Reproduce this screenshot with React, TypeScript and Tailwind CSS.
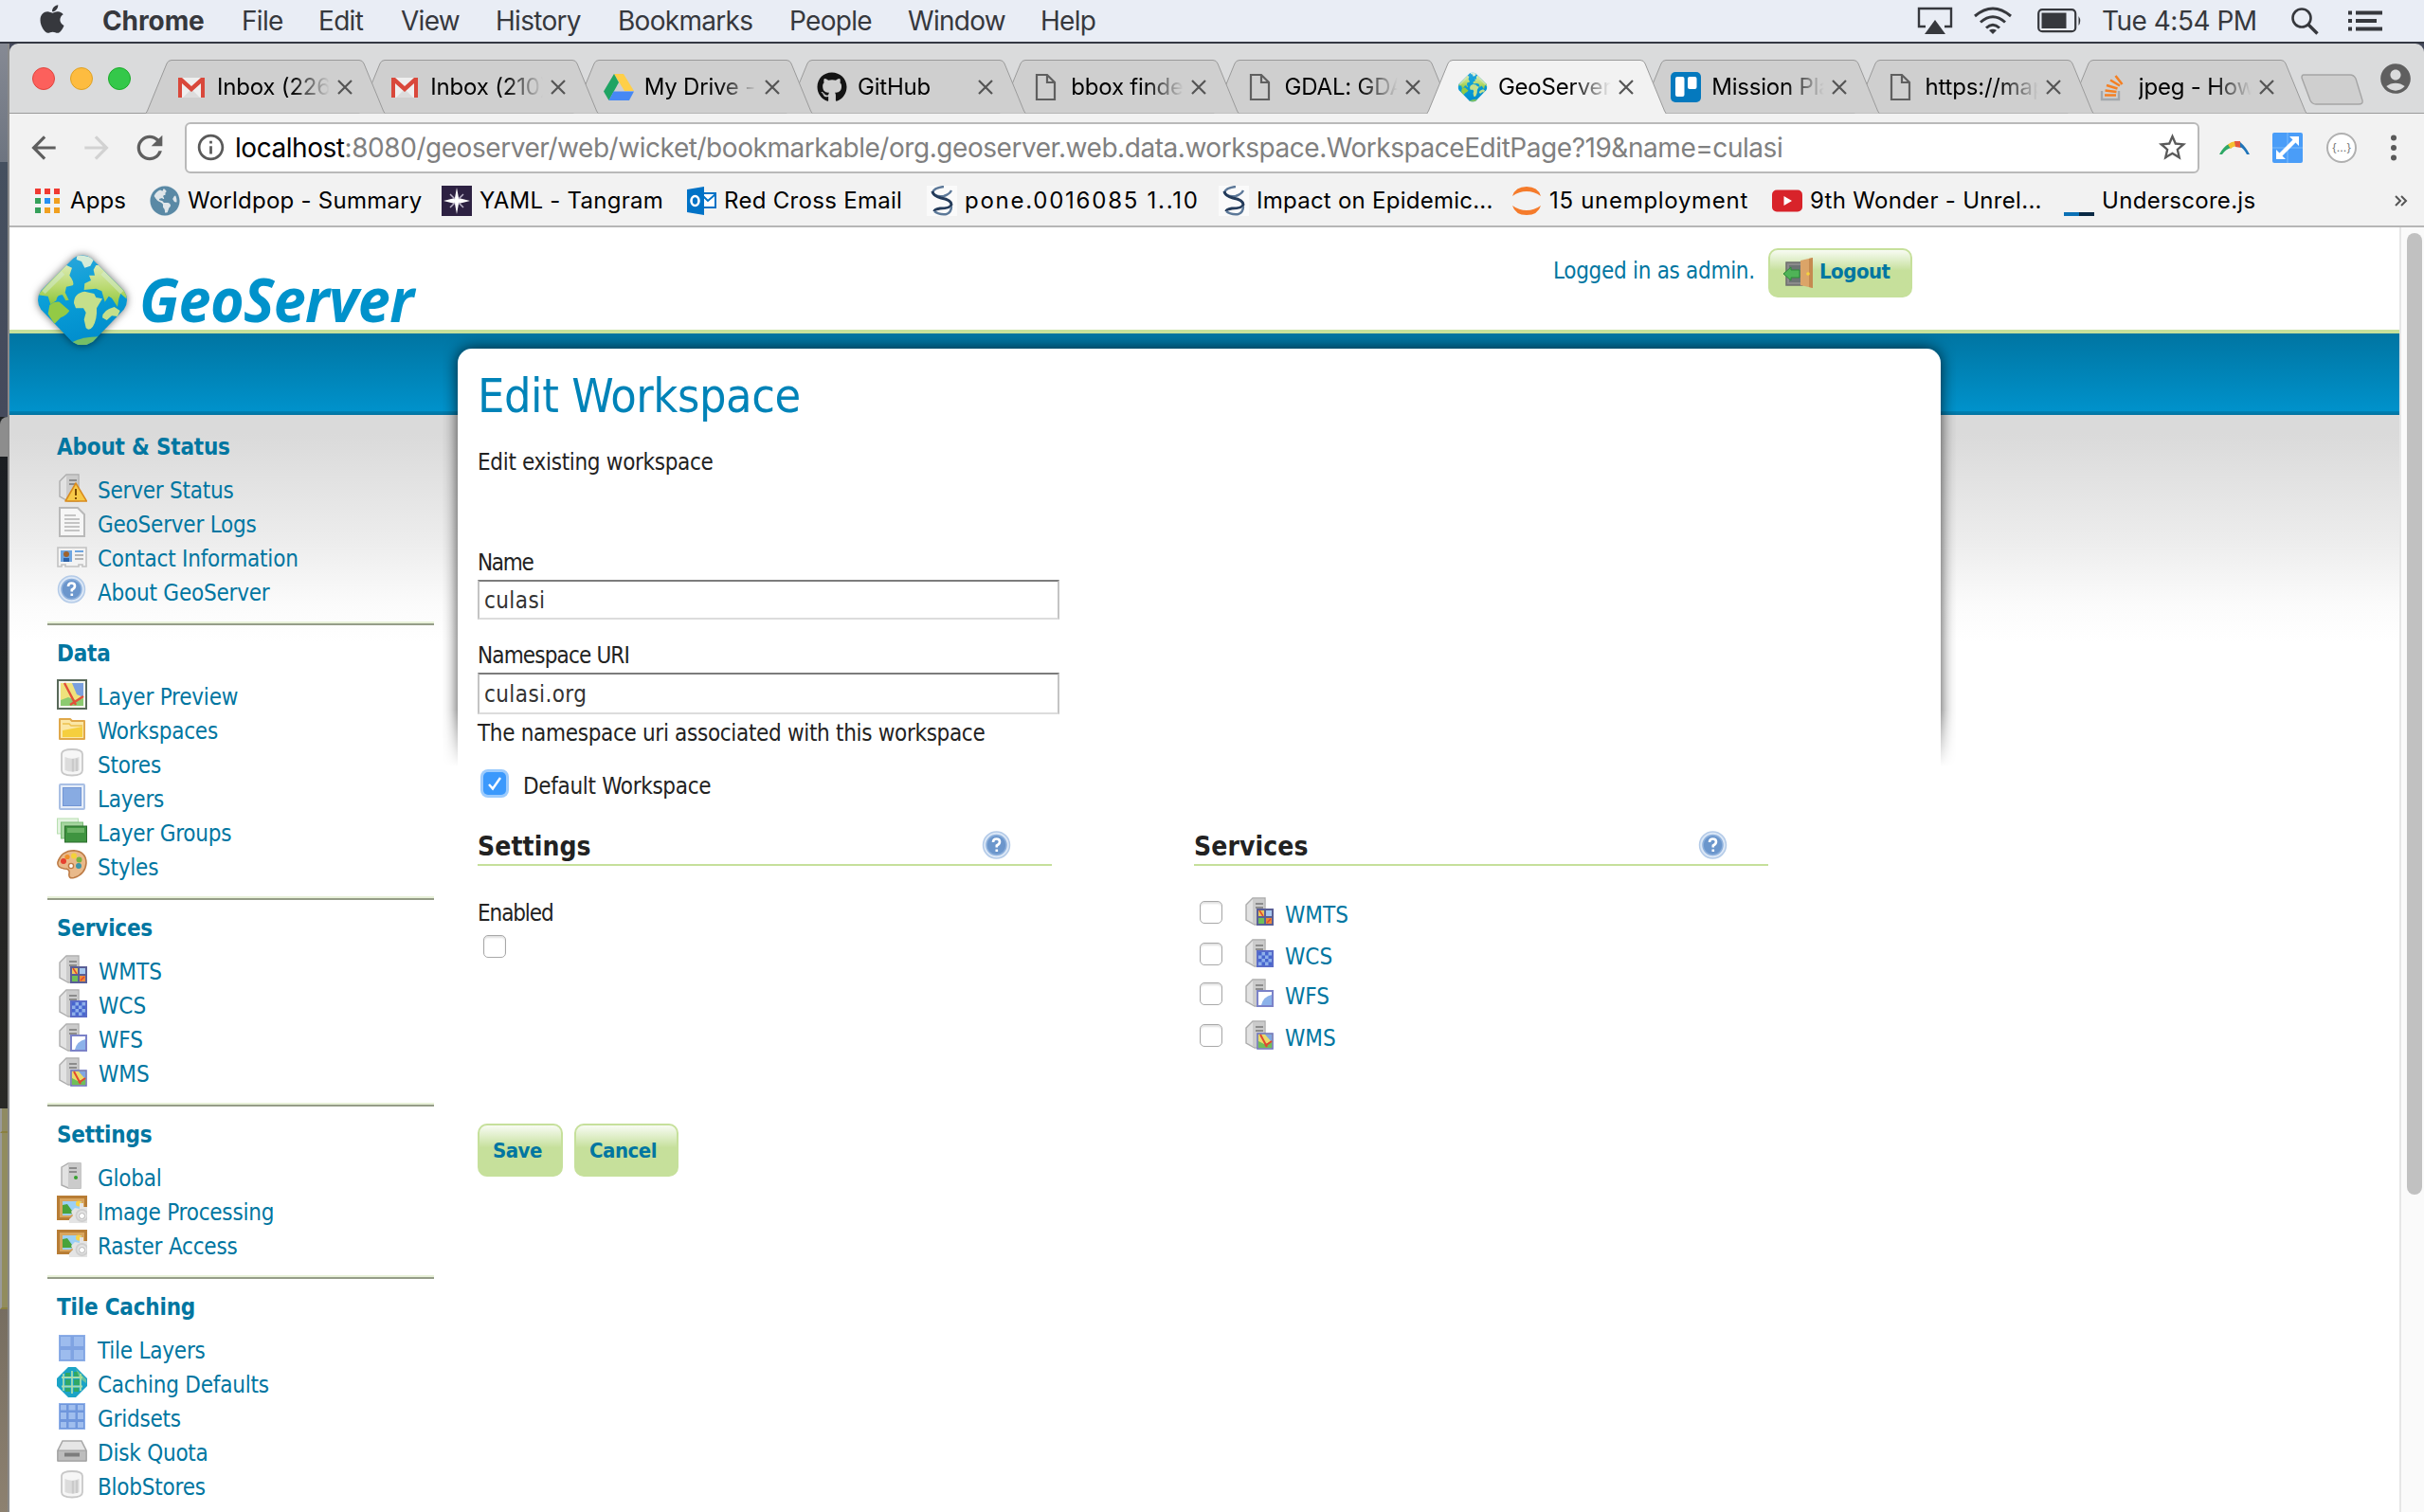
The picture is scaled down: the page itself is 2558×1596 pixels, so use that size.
import { type ReactNode } from "react";
import { FaApple, FaGithub, FaGlobeAmericas } from "react-icons/fa";
import {
  MdAccountCircle,
  MdArrowBack,
  MdArrowForward,
  MdInfoOutline,
  MdRefresh,
  MdStarBorder,
} from "react-icons/md";

const ui = "font-['Inter',sans-serif]";
const tahoma = "font-['DejaVu_Sans_Condensed','DejaVu_Sans',sans-serif]";

/* ---------- shared drawings ---------- */

function Globe({ className }: { className: string }) {
  return (
    <svg viewBox="36 36 330 330" className={className}>
      <defs>
        <linearGradient id="sea" x1="0" y1="0" x2="0.3" y2="1">
          <stop offset="0" stopColor="#3aa9dc" />
          <stop offset="0.5" stopColor="#0a9fd8" />
          <stop offset="1" stopColor="#008ccc" />
        </linearGradient>
        <linearGradient id="land" x1="0" y1="0" x2="0" y2="1">
          <stop offset="0" stopColor="#dcebb4" />
          <stop offset="0.55" stopColor="#b9d96f" />
          <stop offset="1" stopColor="#8cc63f" />
        </linearGradient>
        <clipPath id="diamond">
          <path d="M172 68Q200 48 230 68L332 170Q352 200 332 230L234 332Q200 354 168 332L70 230Q50 200 70 170Z" />
        </clipPath>
      </defs>
      <g clipPath="url(#diamond)">
        <rect x="36" y="36" width="330" height="330" fill="url(#sea)" />
        <path fill="url(#land)" d="M60 184L146 88L168 98L160 122Q178 146 170 154L150 158L146 176L158 200L148 202L138 184Q120 182 118 202L100 214L92 188L60 184Z" />
        <path fill="#93ca45" d="M97 216Q112 204 128 206L160 234Q150 250 132 256L112 276L92 244Z" />
        <path fill="url(#land)" d="M236 104L244 90L270 90L346 172L340 196L322 180L316 196L312 222L294 194L284 188L272 206L262 172L244 164L206 168L208 148L228 138L222 122L240 122Z" />
        <path fill="#c5df8b" d="M174 210Q174 178 208 173L238 180L244 192L264 196L246 226Q248 262 234 284Q222 300 212 288L206 262L212 240L204 226L180 226Z" />
        <path fill="#d5ecd8" d="M184 56L240 66L226 92L208 98L198 78L182 72Z" />
        <path fill="#c5df8b" d="M264 256Q264 232 302 222L320 234L312 252L294 250L278 264Z" />
        <path fill="#76bf66" d="M168 334Q200 316 254 316L226 350L180 348Z" />
        <path d="M78 176L140 114M264 114L326 176" stroke="#d5ecd8" strokeOpacity="0.5" strokeWidth="14" />
      </g>
    </svg>
  );
}

function Server({ children, flat }: { children?: ReactNode; flat?: boolean }) {
  return (
    <svg viewBox="0 0 32 32" className="size-8 shrink-0">
      <path d={flat ? "M5 7L12 3H25V29H12L5 26Z" : "M3 9L10 2H23V30H12L3 25Z"} fill="#e2e2e2" stroke="#adadad" strokeWidth="1.4" />
      <path d={flat ? "M12 3H25V29H12Z" : "M10 3H22V29H10Z"} fill="#cbcbcb" />
      <path d="M13 8H21M13 12H21" stroke="#8c8c8c" strokeWidth="2" />
      {children}
    </svg>
  );
}

const mapBits = (
  <>
    <rect x="15" y="15" width="16" height="16" fill="#e9dc6a" stroke="#6d76c0" strokeWidth="1.600" />
    <path d="M23 16H30V24Z" fill="#7fa6e4" />
    <path d="M16 30V23L22 26L30 24V30Z" fill="#6fbf58" />
    <path d="M18 16L25 29M23 28L30 23" stroke="#e3462f" strokeWidth="2" />
  </>
);

const icons: Record<string, ReactNode> = {
  status: (
    <Server>
      <path d="M20 11L31.500 30H9Z" fill="#f7c948" stroke="#d98a1c" strokeWidth="1.500" strokeLinejoin="round" />
      <path d="M20 17V24M20 26V28" stroke="#7a4a00" strokeWidth="2" />
    </Server>
  ),
  logs: (
    <svg viewBox="0 0 32 32" className="size-8 shrink-0">
      <path d="M3 1H22L29 8V31H3Z" fill="#f6f6f6" stroke="#b9b9b9" strokeWidth="2" />
      <path d="M8 9H20M8 13H24M8 17H24M8 21H24M8 25H24" stroke="#c4c4c4" strokeWidth="1.800" />
    </svg>
  ),
  contact: (
    <svg viewBox="0 0 32 32" className="size-8 shrink-0">
      <path d="M1 7H31V27H27V25H23V27H9V25H5V27H1Z" fill="#f3f3f3" stroke="#c2c2c2" strokeWidth="1.600" />
      <rect x="4" y="10" width="12" height="12" fill="#6ea5e0" />
      <path d="M7 22V18H13V22Z" fill="#2d62a8" />
      <circle cx="10" cy="14" r="3" fill="#a0622c" />
      <path d="M19 11H28" stroke="#6ea5e0" strokeWidth="2" />
      <path d="M19 15H28M19 19H28" stroke="#b5b5b5" strokeWidth="2" />
    </svg>
  ),
  help: (
    <svg viewBox="0 0 32 32" className="size-8 shrink-0">
      <circle cx="15.500" cy="15" r="14" fill="#dbe7f6" stroke="#b4cbe8" strokeWidth="1.500" />
      <circle cx="15.500" cy="15" r="10.500" fill="#6b96cc" stroke="#8db0dc" strokeWidth="1.500" />
      <path d="M12 12Q12 8.500 15.500 8.500Q19 8.500 19 11.500Q19 14 15.800 15.500V17.500M15.800 19.500V22" stroke="#fff" strokeWidth="2.600" fill="none" />
    </svg>
  ),
  preview: (
    <svg viewBox="0 0 32 32" className="size-8 shrink-0">
      <rect x="1" y="1" width="30" height="30" fill="#f4f6ee" stroke="#58695a" strokeWidth="2" />
      <rect x="4" y="4" width="24" height="24" fill="#efe27c" />
      <path d="M16 4H28V19L21 16Z" fill="#7aa0de" />
      <path d="M4 28V22L12 19L20 22L28 20V28Z" fill="#8ccb70" />
      <path d="M8 4L20 27M14 27L28 18" stroke="#e2503a" strokeWidth="2.400" />
    </svg>
  ),
  folder: (
    <svg viewBox="0 0 32 32" className="size-8 shrink-0">
      <path d="M3 6H14L16 8H29V27H3Z" fill="#fbe7a6" stroke="#e0a84a" strokeWidth="2" strokeLinejoin="round" />
      <path d="M6 11H13L15 13H27" stroke="#edc14e" strokeWidth="1.500" fill="none" />
      <path d="M6 25V18L27 14V25Z" fill="#f5cf3e" />
    </svg>
  ),
  store: (
    <svg viewBox="0 0 32 32" className="size-8 shrink-0">
      <path d="M5 7Q5 2 16 2Q27 2 27 7V24Q27 29.500 16 29.500Q5 29.500 5 24Z" fill="#f6f6f6" stroke="#c8c8c8" strokeWidth="1.800" />
      <path d="M8.500 10Q16 13.500 23.500 10V24Q16 27 8.500 24Z" fill="#dcdcdc" />
      <path d="M17 12V25.500M21 11.500V25" stroke="#cacaca" strokeWidth="2.400" />
    </svg>
  ),
  layers: (
    <svg viewBox="0 0 32 32" className="size-8 shrink-0">
      <rect x="3" y="3" width="26" height="26" rx="1" fill="#e4ecf8" stroke="#a9bfe4" strokeWidth="2" />
      <rect x="6.500" y="6.500" width="19" height="19" fill="#88abe2" stroke="#7295d4" />
    </svg>
  ),
  groups: (
    <svg viewBox="0 0 32 32" className="size-8 shrink-0">
      <rect x="0.500" y="3" width="22" height="16" fill="#e3f3e0" stroke="#b7dfb0" />
      <rect x="4.500" y="7" width="23" height="17" fill="#a5d59f" stroke="#7dbd78" />
      <rect x="8.500" y="11" width="23" height="17" fill="#3f9440" stroke="#2b6a2c" />
      <path d="M11 13H29V18H11Z" fill="#6cb366" />
    </svg>
  ),
  styles: (
    <svg viewBox="0 0 32 32" className="size-8 shrink-0">
      <path d="M1 13Q5 1 18 0.800Q31 2 31 14Q30 26 18 29.500Q12 31 13 25Q14 20 8 20Q0 19 1 13Z" fill="#e9b98a" stroke="#bd7b45" strokeWidth="1.600" />
      <circle cx="7" cy="12" r="3" fill="#e6402f" />
      <circle cx="11" cy="7.500" r="2.600" fill="#ef8f2a" />
      <circle cx="18" cy="6.500" r="3" fill="#f3d23a" />
      <circle cx="23.500" cy="10.500" r="3" fill="#79b63c" />
      <circle cx="23" cy="17" r="3" fill="#3c95a8" />
      <circle cx="15" cy="17" r="2.600" fill="#fff" stroke="#bd7b45" strokeWidth="1.400" />
    </svg>
  ),
  wmts: (
    <Server>
      <rect x="14" y="13" width="18" height="18" fill="#5a5f96" />
      <rect x="16" y="15" width="6" height="6" fill="#ecc75c" />
      <rect x="24" y="15" width="6" height="6" fill="#a7c8ee" />
      <rect x="16" y="23" width="6" height="6" fill="#6fbf58" />
      <rect x="24" y="23" width="6" height="6" fill="#ec8a3a" />
      <path d="M17 15L21 21M25 28L29 24" stroke="#e3462f" strokeWidth="1.500" />
    </Server>
  ),
  wcs: (
    <Server>
      <rect x="15" y="14" width="16" height="16" fill="#8fb0ea" stroke="#5a6cc8" strokeWidth="2" />
      <path d="M16 15h3.500v3.500h-3.500zM23 15h3.500v3.500h-3.500zM19.500 18.500h3.500v3.500h-3.500zM26.500 18.500h3.500v3.500h-3.500zM16 22h3.500v3.500h-3.500zM23 22h3.500v3.500h-3.500zM19.500 25.500h3.500v3.500h-3.500zM26.500 25.500h3.500v3.500h-3.500z" fill="#4766cf" />
    </Server>
  ),
  wfs: (
    <Server>
      <rect x="15" y="14" width="16" height="16" fill="#fff" stroke="#7b82c8" strokeWidth="2" />
      <path d="M19 29Q21 20 30 18V29Z" fill="#8cb2ea" />
    </Server>
  ),
  wms: <Server>{mapBits}</Server>,
  global: (
    <Server flat>
      <circle cx="20" cy="18" r="2" fill="#35a12f" />
    </Server>
  ),
  image: (
    <svg viewBox="0 0 32 32" className="size-8 shrink-0">
      <path d="M0 1H32V16L16 27H0Z" fill="#b87d35" />
      <path d="M3 4H29V14L14 24H3Z" fill="#d9a55e" />
      <path d="M6 7H26V14L14 22H6Z" fill="#9bd0f5" />
      <path d="M6 20V11L11 10L16 17V20Z" fill="#49a33b" />
      <circle cx="23" cy="9.500" r="3" fill="#f5d34a" />
      <path d="M24 9H28V13H32V30H13V26L17 22L15 18L19 14L24 15Z" fill="#e4e4e4" />
      <circle cx="26.500" cy="22" r="6" fill="none" stroke="#cfcfcf" strokeWidth="2" />
      <circle cx="26.500" cy="22.500" r="3" fill="#fff" stroke="#b5b5b5" />
    </svg>
  ),
  tiles: (
    <svg viewBox="0 0 32 32" className="size-8 shrink-0">
      <rect x="2.500" y="2.500" width="27" height="27" fill="#7fa3e2" stroke="#8fb0e8" />
      <path d="M4 4H14.500V14H4ZM18 4H28V14H18ZM4 18H14.500V28H4ZM18 18H28V28H18Z" fill="#9dbcee" />
    </svg>
  ),
  caching: (
    <svg viewBox="0 0 32 32" className="size-8 shrink-0">
      <path d="M12 0H20L32 12V20L20 32H12L0 20V12Z" fill="#1ba3c6" />
      <path d="M9 6H14V10H9ZM18 5H23V10H18ZM9 13H14V19H9ZM18 13H24V19H18ZM9 22H14V26H9ZM18 22H23V26H18Z" fill="#2fa866" />
      <path d="M7 7V25M16 4V28M25 7V25M5 11H27M5 20.500H27" stroke="#a6dcae" strokeWidth="1.800" />
      <path d="M20 2L31 13V17L24 12Z" fill="#a9dd7e" fillOpacity="0.5" />
    </svg>
  ),
  gridsets: (
    <svg viewBox="0 0 32 32" className="size-8 shrink-0">
      <rect x="2.500" y="2.500" width="27" height="27" fill="#6f96dc" stroke="#8fb0e8" />
      <path d="M4 4H10V9.500H4ZM12.500 4H19.500V9.500H12.500ZM22 4H28V9.500H22ZM4 12H10V19H4ZM12.500 12H19.500V19H12.500ZM22 12H28V19H22ZM4 22H10V28H4ZM12.500 22H19.500V28H12.500ZM22 22H28V28H22Z" fill="#a0beee" />
    </svg>
  ),
  disk: (
    <svg viewBox="0 0 32 32" className="size-8 shrink-0">
      <path d="M6 6H26L31 16V27H1V16Z" fill="#e6e6e6" stroke="#a9a9a9" strokeWidth="1.600" />
      <path d="M1 16H31V27H1Z" fill="#bdbdbd" stroke="#9c9c9c" />
      <path d="M8 20.500H24" stroke="#7d7d7d" strokeWidth="4" />
    </svg>
  ),
};

/* ---------- macOS menu bar ---------- */

const menus = [
  ["File", "w-[81px]"],
  ["Edit", "w-[87px]"],
  ["View", "w-[100px]"],
  ["History", "w-[129px]"],
  ["Bookmarks", "w-[181px]"],
  ["People", "w-[125px]"],
  ["Window", "w-[140px]"],
  ["Help", "w-[70px]"],
];

function MenuBar() {
  return (
    <div className={`${ui} flex h-[44px] shrink-0 items-center bg-[#e9edf5] text-[28px] tracking-[-0.7px] text-[#36383d]`}>
      <FaApple className="-mt-[4px] ml-[38px] size-[34px]" />
      <span className="ml-[36px] w-[147px] font-bold tracking-[-0.1px]">Chrome</span>
      {menus.map(([label, width]) => (
        <span key={label} className={width}>
          {label}
        </span>
      ))}
      <svg viewBox="0 0 38 30" className="ml-auto h-[30px] w-[38px]">
        <path d="M9 21H2V2H36V21H29" fill="none" stroke="#36383d" strokeWidth="2.400" />
        <path d="M19 14L30 29H8Z" fill="#36383d" />
      </svg>
      <svg viewBox="0 0 42 30" className="ml-[21px] h-[30px] w-[42px]" fill="none" stroke="#36383d" strokeWidth="3">
        <path d="M2 10Q21 -6 40 10M8 16.500Q21 5 34 16.500M14 22.500Q21 16 28 22.500" />
        <path d="M21 29L17 25Q21 22.500 25 25Z" fill="#36383d" stroke="none" />
      </svg>
      <svg viewBox="0 0 48 26" className="ml-[26px] h-[26px] w-[48px]">
        <rect x="1.200" y="1.200" width="39" height="23" rx="4" fill="none" stroke="#36383d" strokeWidth="2.200" />
        <rect x="4.500" y="4.500" width="26" height="16.500" fill="#36383d" />
        <path d="M43.500 8Q47 13 43.500 18Z" fill="#36383d" />
      </svg>
      <span className="ml-[20px] w-[165px] tracking-[-0.5px]">Tue 4:54 PM</span>
      <svg viewBox="0 0 30 30" className="ml-[34px] size-[30px]" fill="none" stroke="#36383d" strokeWidth="2.600">
        <circle cx="12" cy="12" r="9.500" />
        <path d="M18.500 18.500L28.500 28.500" strokeWidth="3.400" />
      </svg>
      <svg viewBox="0 0 36 22" className="mr-[44px] ml-[31px] h-[22px] w-[36px]" stroke="#36383d" strokeWidth="4">
        <path d="M0 2.500H4M8 2.500H36M0 11H4M8 11H30M0 19.500H4M8 19.500H36" />
      </svg>
    </div>
  );
}

/* ---------- browser tabs ---------- */

const doc = (
  <svg viewBox="0 0 32 32" className="size-8">
    <path d="M7 3H18L26 11V29H7ZM18 3V11H26" fill="none" stroke="#5f5f5f" strokeWidth="2.200" />
  </svg>
);
const gmail = (
  <svg viewBox="0 0 32 32" className="size-8">
    <path d="M3 6H29V27H3Z" fill="#efefef" />
    <path d="M7 27L16 18L25 27Z" fill="#dcdcdc" />
    <path d="M2 27V6H6L16 15L26 6H30V27H26V12L16 21L6 12V27Z" fill="#d9483b" />
  </svg>
);
const drive = (
  <svg viewBox="0 0 32 32" className="size-8">
    <path d="M11 2H21L32 20H22Z" fill="#ffcf48" />
    <path d="M11 2L16 11L5.500 30L0 20.500Z" fill="#1fa463" />
    <path d="M10.500 20.500H32L27 30H5.500Z" fill="#4688f4" />
  </svg>
);
const trello = (
  <svg viewBox="0 0 32 32" className="size-8">
    <rect width="32" height="32" rx="5" fill="#0479be" />
    <rect x="5" y="5" width="9.500" height="21" rx="2" fill="#fff" />
    <rect x="18" y="5" width="9.500" height="13" rx="2" fill="#fff" />
  </svg>
);
const overflow = (
  <svg viewBox="0 0 32 32" className="size-8">
    <path d="M4 20V29H22V20" fill="none" stroke="#a3a8ad" strokeWidth="2.400" />
    <path d="M7 24.500H19M7.500 19.500L19.500 21M9 14L20.500 17.500M13 8.500L23 14.500M18.500 4L25.500 13" stroke="#f48024" strokeWidth="2.600" />
  </svg>
);

const tabs: { title: string; icon: ReactNode; z: string; active?: boolean }[] = [
  { title: "Inbox (226)", icon: gmail, z: "z-[10]" },
  { title: "Inbox (210)", icon: gmail, z: "z-[9]" },
  { title: "My Drive - G", icon: drive, z: "z-[8]" },
  { title: "GitHub", icon: <FaGithub className="size-8 text-[#141414]" />, z: "z-[7]" },
  { title: "bbox finder", icon: doc, z: "z-[6]" },
  { title: "GDAL: GDAL", icon: doc, z: "z-[5]" },
  { title: "GeoServer:", icon: <Globe className="-m-[2px] size-[36px]" />, z: "z-[20]", active: true },
  { title: "Mission Plan", icon: trello, z: "z-[4]" },
  { title: "https://map", icon: doc, z: "z-[3]" },
  { title: "jpeg - How t", icon: overflow, z: "z-[2]" },
];

function TabStrip() {
  return (
    <div className={`${ui} flex h-[73px] shrink-0 bg-[#dadbdc]`}>
      <div className="flex w-[144px] shrink-0 items-center gap-[16px] pl-[24px]">
        <span className="size-6 rounded-full border border-[#e0443e] bg-[#fc605c]" />
        <span className="size-6 rounded-full border border-[#dea123] bg-[#fdbc40]" />
        <span className="size-6 rounded-full border border-[#1aab29] bg-[#34c84a]" />
      </div>
      <div className="flex shrink-0 pt-[17px]">
        {tabs.map((t, i) => (
          <div key={i} className={`relative -mr-[26.7px] flex h-[56px] w-[252px] shrink-0 items-center pt-px pl-[32px] ${t.z}`}>
            <svg viewBox="0 0 252 56" className="absolute inset-0 h-[56px] w-[252px] overflow-visible">
              <path
                d="M0 56.500L1.500 54L22 4Q23.500 .5 27 .5H225Q228.500 .5 230 4L250.500 54L252 56.500"
                fill={t.active ? "#f2f2f2" : "#cfcfcf"}
                stroke="#9a9a9a"
              />
              {t.active && <path d="M1 57H251" stroke="#f2f2f2" strokeWidth="2" />}
            </svg>
            <span className="relative flex size-8 shrink-0">{t.icon}</span>
            <span className="relative ml-[11px] w-[120px] shrink-0 overflow-hidden text-[24px] tracking-[-0.2px] whitespace-nowrap text-black mask-r-from-65% mask-r-to-99%">
              {t.title}
            </span>
            <svg viewBox="0 0 16 16" className="relative ml-[7px] size-[16px] shrink-0" stroke="#555" strokeWidth="2.200">
              <path d="M1 1L15 15M15 1L1 15" />
            </svg>
          </div>
        ))}
      </div>
      <svg viewBox="0 0 68 34" className="mt-[32px] ml-[20px] h-[34px] w-[68px] shrink-0">
        <path d="M4 1H53Q57 1 59 5L66 28Q67 32 62 32H17Q13 32 11 28L2 4Q2 1 4 1Z" fill="#cfcfcf" stroke="#a5a5a5" strokeWidth="1.400" />
      </svg>
      <MdAccountCircle className="mt-[18px] mr-[11px] ml-auto size-[38px] shrink-0 text-[#5f5f5f]" />
    </div>
  );
}

/* ---------- toolbar and bookmarks ---------- */

function Toolbar() {
  return (
    <div className={`${ui} flex h-[73px] shrink-0 items-center border-t border-[#9a9a9a] bg-[#f2f2f2] pb-px`}>
      <MdArrowBack className="ml-[17px] size-[38px] text-[#5f5f5f]" />
      <MdArrowForward className="ml-[18px] size-[38px] text-[#d2d2d2]" />
      <MdRefresh className="ml-[17px] size-[40px] text-[#5f5f5f]" />
      <div className="ml-[17px] flex h-[54px] w-[2126px] items-center rounded-[6px] border-2 border-[#b9b9b9] bg-white">
        <MdInfoOutline className="ml-[9px] size-[33px] text-[#5a5a5a]" />
        <span className="ml-[9px] text-[28px] tracking-[-0.45px] whitespace-nowrap text-[#808080]">
          <span className="text-black">localhost</span>
          :8080/geoserver/web/wicket/bookmarkable/org.geoserver.web.data.workspace.WorkspaceEditPage?19&amp;name=culasi
        </span>
        <MdStarBorder className="mr-[9px] ml-auto size-[35px] text-[#5a5a5a]" />
      </div>
      <svg viewBox="0 0 32 16" className="ml-[21px] h-[16px] w-[32px]">
        <path d="M0 15Q4 7 10 4L13 8Q7 9 3 15Z" fill="#2fa866" />
        <path d="M9 4.500Q12 1.500 17 1V6.500Q14 6.500 12 9Z" fill="#f5c031" />
        <path d="M16 1H22L23 8L17 7Z" fill="#e4573d" />
        <path d="M22 2Q28 7 32 15H29Q26 9 22 7Z" fill="#1f74b8" />
      </svg>
      <svg viewBox="0 0 32 32" className="ml-[24px] size-8">
        <rect width="32" height="32" rx="2" fill="#4a9df8" />
        <path d="M0 16H32M16 0V32" stroke="#7dbbfb" />
        <path d="M18 4H28V14L24.500 10.500L10.500 24.500L14 28H4V18L7.500 21.500L21.500 7.500Z" fill="#fff" />
      </svg>
      <span className="ml-[25px] flex size-8 items-center justify-center rounded-full border-2 border-[#b0b0b0] bg-white text-[12px] text-[#777]">{"{...}"}</span>
      <svg viewBox="0 0 8 28" className="ml-[35px] h-[28px] w-[8px]" fill="#5a5a5a">
        <circle cx="4" cy="3.500" r="3" />
        <circle cx="4" cy="14" r="3" />
        <circle cx="4" cy="24.500" r="3" />
      </svg>
    </div>
  );
}

const helix = (
  <svg viewBox="0 0 32 32" className="size-8">
    <rect width="32" height="32" fill="#fafafa" />
    <path d="M18 1Q8 2 6 7Q8 12 18 11Q24 9 26 5" fill="none" stroke="#5c7898" strokeWidth="2.400" />
    <path d="M6 6Q7 11 15 13Q26 15 26 20Q25 24 14 24Q8 25 8 27" fill="none" stroke="#243b5a" strokeWidth="3" />
    <path d="M8 27Q13 31 21 30Q26 28 26 22" fill="none" stroke="#5c7898" strokeWidth="2.400" />
  </svg>
);

const bookmarks: { label: string; width: string; track: string; icon: ReactNode }[] = [
  {
    label: "Apps",
    width: "w-[124px]",
    track: "tracking-[0.1px]",
    icon: (
      <svg viewBox="0 0 32 32" className="size-8">
        <path d="M3 3h6v6h-6zM13 3h6v6h-6zM23 3h6v6h-6z" fill="#f03a32" />
        <path d="M3 13h6v6h-6zM3 23h6v6h-6z" fill="#35a05a" />
        <path d="M13 13h6v6h-6z" fill="#2490f3" />
        <path d="M23 13h6v6h-6zM13 23h6v6h-6zM23 23h6v6h-6z" fill="#f0a020" />
      </svg>
    ),
  },
  {
    label: "Worldpop - Summary",
    width: "w-[308px]",
    track: "tracking-[0.25px]",
    icon: (
      <span className="flex size-8 items-center justify-center rounded-full bg-[#dfe6ea]">
        <FaGlobeAmericas className="size-8 text-[#5a89a5]" />
      </span>
    ),
  },
  {
    label: "YAML - Tangram",
    width: "w-[258px]",
    track: "tracking-[0.25px]",
    icon: (
      <svg viewBox="0 0 32 32" className="size-8">
        <rect width="32" height="32" fill="#2d2142" />
        <path d="M16 2L18 13L30 16L18 19L16 30L14 19L2 16L14 13Z" fill="#fff" />
        <path d="M9 9L14 14M23 9L18 14M9 23L14 18M23 23L18 18" stroke="#b9b2c6" strokeWidth="1.500" />
      </svg>
    ),
  },
  {
    label: "Red Cross Email",
    width: "w-[254px]",
    track: "tracking-[0.3px]",
    icon: (
      <svg viewBox="0 0 32 32" className="size-8">
        <path d="M17 8H31V23H17Z" fill="#fff" stroke="#0072c6" strokeWidth="2" />
        <path d="M17 10L23 16L31 9" fill="none" stroke="#0072c6" strokeWidth="2" />
        <path d="M1 4L19 1V31L1 28Z" fill="#0072c6" />
        <ellipse cx="9.500" cy="16" rx="4" ry="5" fill="none" stroke="#fff" strokeWidth="2.600" />
      </svg>
    ),
  },
  { label: "pone.0016085 1..10", width: "w-[308px]", track: "tracking-[1.75px]", icon: helix },
  { label: "Impact on Epidemic...", width: "w-[309px]", track: "tracking-[0.25px]", icon: helix },
  {
    label: "15 unemployment",
    width: "w-[275px]",
    track: "tracking-[0.7px]",
    icon: (
      <svg viewBox="0 0 32 32" className="size-8" fill="#f57b2b">
        <path d="M1 11Q4 1 16 1Q28 1 31 11Q24 6 16 6Q8 6 1 11Z" />
        <path d="M1 21Q4 31 16 31Q28 31 31 21Q24 26 16 26Q8 26 1 21Z" />
      </svg>
    ),
  },
  {
    label: "9th Wonder - Unrel...",
    width: "w-[308px]",
    track: "tracking-[0.3px]",
    icon: (
      <svg viewBox="0 0 32 32" className="size-8">
        <rect y="4.500" width="32" height="23" rx="5" fill="#d8232a" />
        <path d="M12.500 11L21 16L12.500 21Z" fill="#fff" />
      </svg>
    ),
  },
  {
    label: "Underscore.js",
    width: "w-[300px]",
    track: "tracking-[0.3px]",
    icon: (
      <svg viewBox="0 0 32 32" className="size-8">
        <path d="M0 28H16V32H0Z" fill="#0b71b5" />
        <path d="M16 28H32V32H16Z" fill="#0a2a45" />
      </svg>
    ),
  },
];

function Bookmarks() {
  return (
    <div className={`${ui} flex h-[48px] shrink-0 items-center border-b-2 border-[#b6b6b6] bg-[#f2f2f2] pb-[7px] pl-[24px] text-[24px] text-black`}>
      {bookmarks.map((b) => (
        <div key={b.label} className={`flex shrink-0 items-center gap-[8px] whitespace-nowrap ${b.width} ${b.track}`}>
          {b.icon}
          <span>{b.label}</span>
        </div>
      ))}
      <svg viewBox="0 0 14 12" className="mr-[17px] ml-auto h-[12px] w-[14px]" fill="none" stroke="#555" strokeWidth="2">
        <path d="M1 1L6 6L1 11M7 1L12 6L7 11" />
      </svg>
    </div>
  );
}

/* ---------- GeoServer page ---------- */

const sections = [
  { title: "About & Status", items: [["status", "Server Status"], ["logs", "GeoServer Logs"], ["contact", "Contact Information"], ["help", "About GeoServer"]] },
  { title: "Data", items: [["preview", "Layer Preview"], ["folder", "Workspaces"], ["store", "Stores"], ["layers", "Layers"], ["groups", "Layer Groups"], ["styles", "Styles"]] },
  { title: "Services", items: [["wmts", "WMTS"], ["wcs", "WCS"], ["wfs", "WFS"], ["wms", "WMS"]] },
  { title: "Settings", items: [["global", "Global"], ["image", "Image Processing"], ["image", "Raster Access"]] },
  { title: "Tile Caching", items: [["tiles", "Tile Layers"], ["caching", "Caching Defaults"], ["gridsets", "Gridsets"], ["disk", "Disk Quota"], ["store", "BlobStores"]] },
];

function Sidebar() {
  return (
    <nav className="w-[473px] shrink-0 pt-[3px] pl-[40px] text-[24px] text-[#0076a1]">
      {sections.map((s, i) => (
        <section key={s.title} className="w-[408px] pt-[15px]">
          <h3 className="ml-[10px] leading-[30px] font-bold tracking-[-0.2px]">{s.title}</h3>
          <ul className="mt-[13px] ml-[10px]">
            {s.items.map(([icon, label]) => (
              <li key={label} className="flex h-[36px] items-start">
                <span className="-mt-px flex">{icons[icon]}</span>
                <a className={label.length < 5 ? "ml-[12px] leading-[36px]" : "ml-[11px] leading-[36px] tracking-[-0.22px]"}>{label}</a>
              </li>
            ))}
          </ul>
          {i < sections.length - 1 && <div className="mt-[12px] h-[4px] border-t-2 border-b-2 border-t-[#e8f1d9] border-b-[#959d88]" />}
        </section>
      ))}
    </nav>
  );
}

function Box({ checked }: { checked?: boolean }) {
  return checked ? (
    <span className="mt-px ml-[6px] flex size-6 shrink-0 items-center justify-center rounded-[5px] bg-[#3b99fc] ring-3 ring-[#9ccbfd]">
      <svg viewBox="0 0 16 16" className="size-4" fill="none" stroke="#fff" strokeWidth="2.400">
        <path d="M2 9L6 13.500L14 2" />
      </svg>
    </span>
  ) : (
    <span className="ml-[6px] block size-6 shrink-0 rounded-[5px] border border-[#a8a8a8] bg-white shadow-[inset_0_2px_2px_rgba(0,0,0,0.12)]" />
  );
}

const greenButton =
  "flex items-center rounded-[10px] border-2 border-[#c6e09b] bg-linear-to-b from-[#f8fbf3] to-[#c6e09b] to-45% pl-[14px] text-[22px] font-bold text-[#0076a1]";

const serviceRows = [
  ["wmts", "WMTS", "h-[44px]"],
  ["wcs", "WCS", "h-[42px]"],
  ["wfs", "WFS", "h-[44px]"],
  ["wms", "WMS", "h-[30px]"],
];

function Legend({ title }: { title: string }) {
  return (
    <div className="flex h-[37px] items-start border-b-2 border-[#c6e09b]">
      <h4 className="w-[532px] text-[28px] leading-[34px] font-bold tracking-[0.1px]">{title}</h4>
      {icons.help}
    </div>
  );
}

const field =
  "flex w-[614px] items-center border-2 border-x-[#c4c4c4] border-t-[#7c7c7c] border-b-[#dcdcdc] pt-px pl-[5px] tracking-[0.4px] text-[#333]";

function Panel() {
  return (
    <main className="relative z-10 -mt-[71px] h-[1300px] w-[1565px] shrink-0">
      <div className="absolute -top-4 -right-4 -left-4 h-[462px] overflow-hidden px-4 pt-4 mask-b-from-86% mask-b-to-99%">
        <div className="h-[560px] rounded-t-[15px] shadow-[0_0_16px_rgba(0,0,0,0.75)]" />
      </div>
      <div className="relative h-full rounded-t-[15px] bg-white pt-[20px] pl-[21px] text-[24px] tracking-[-0.32px] text-[#222]">
        <h1 className="text-[50px] leading-[60px] tracking-[-0.45px] text-[#0083b8]">Edit Workspace</h1>
        <p className="mt-[25px] leading-[30px]">Edit existing workspace</p>
        <label className="mt-[76px] block leading-[30px] tracking-[-1.3px]">Name</label>
        <div className={`${field} mt-[3px] h-[42px]`}>culasi</div>
        <label className="mt-[23px] block leading-[30px] tracking-[-0.85px]">Namespace URI</label>
        <div className={`${field} mt-[3px] h-[44px]`}>culasi.org</div>
        <p className="mt-[5px] leading-[30px]">The namespace uri associated with this workspace</p>
        <div className="mt-[25px] flex h-[30px] items-start">
          <Box checked />
          <span className="ml-[18px] leading-[32px]">Default Workspace</span>
        </div>
        <div className="mt-[33px] flex h-[309px] gap-[150px]">
          <section className="w-[606px]">
            <Legend title="Settings" />
            <p className="mt-[35px] mb-[8px] leading-[30px] tracking-[-1.1px]">Enabled</p>
            <Box />
          </section>
          <section className="w-[606px]">
            <Legend title="Services" />
            <ul className="mt-[37px] text-[#0076a1]">
              {serviceRows.map(([icon, label, h]) => (
                <li key={label} className={`flex items-start ${h}`}>
                  <Box />
                  <span className="-mt-[5px] ml-[22px] flex">{icons[icon]}</span>
                  <a className="ml-[12px] leading-[30px] tracking-normal">{label}</a>
                </li>
              ))}
            </ul>
          </section>
        </div>
        <div className="flex gap-[12px] tracking-[-0.5px]">
          <button className={`${greenButton} h-[56px] w-[90px]`}>Save</button>
          <button className={`${greenButton} h-[56px] w-[110px]`}>Cancel</button>
        </div>
      </div>
    </main>
  );
}

function Page() {
  return (
    <div className={`${tahoma} flex min-h-0 grow bg-white`}>
      <div className="flex w-[2522px] flex-col overflow-hidden">
        <header className="relative z-20 flex h-[108px] shrink-0 items-start">
          <div className="mt-[22px] ml-[22px] size-[110px] drop-shadow-[0_0_4px_rgba(0,0,0,0.55)]">
            <Globe className="size-[110px]" />
          </div>
          <span className="mt-[35px] ml-[5px] origin-left scale-x-[0.94] font-['Open_Sans',sans-serif] text-[65px] leading-[80px] font-bold tracking-[-0.7px] text-[#0092cb] italic">
            GeoServer
          </span>
          <div className="absolute top-[22px] left-[1629px] flex items-start">
            <span className="mt-[9px] w-[227px] text-[24px] leading-[30px] tracking-[-0.3px] text-[#0076a1]">Logged in as admin.</span>
            <button className={`${greenButton} h-[52px] w-[152px] pb-[4px] tracking-[-0.5px]`}>
              <svg viewBox="0 0 32 32" className="mt-[4px] mr-[6px] size-8">
                <path d="M3 5H20V29H3Z" fill="#8b8b8b" stroke="#6e6e6e" strokeWidth="1.500" />
                <path d="M6 8H18V26H6Z" fill="#6c7474" />
                <path d="M18 3L31 0V32L18 29Z" fill="#dba468" />
                <path d="M27 1L31 0V32L27 31Z" fill="#c58a50" />
                <path d="M0 17L8 10V13H17V21H8V24Z" fill="#4fb357" stroke="#2f8a39" />
                <circle cx="26" cy="17" r="1.800" fill="#f6d33c" />
              </svg>
              Logout
            </button>
          </div>
        </header>
        <div className="h-[91px] shrink-0 border-t-4 border-b border-t-[#c6e09b] border-b-[#85b4c8]">
          <div className="h-[82px] bg-linear-to-b from-[#0075a2] to-[#0092cb]" />
          <div className="h-[4px] bg-linear-to-b from-[#0082b5] to-[#0072a0]" />
        </div>
        <div className="-mt-px flex min-h-0 grow">
          <div className="flex w-full bg-[linear-gradient(to_bottom,#dadada_0,#dadada_20px,#ededed_135px,#fbfbfb_200px,#fff_240px)] pt-px">
            <Sidebar />
            <Panel />
          </div>
        </div>
      </div>
      <div className="w-[26px] border-l-2 border-[#e6e6e6] bg-[#fafafa] pt-[6px] pl-[6px]">
        <div className="h-[1015px] w-[16px] rounded-full bg-[#c1c1c1]" />
      </div>
    </div>
  );
}

/* Sliver of the desktop and background windows left of the browser. */
function DesktopEdge() {
  return (
    <div className="flex w-[10px] shrink-0 flex-col border-r-2 border-[#8a8a8a] bg-[#1e2022]">
      <div className="h-[125px] bg-linear-to-b from-[#868a94] to-[#6d7480]" />
      <div className="h-[269px] bg-linear-to-b from-[#45505f] to-[#454a5c]" />
      <div className="h-[42px] rounded-tl-[8px] bg-[#8d8d8d]" />
      <div className="h-[688px] bg-linear-to-b from-[#1b1e22] to-[#2a2926]" />
      <div className="h-[26px] border-b-2 border-l-2 border-b-[#8a8040] border-l-[#9a9a9a] bg-[#8f8a62]" />
      <div className="h-[186px] border-b-2 border-l-2 border-b-[#8a8040] border-l-[#9a9a9a] bg-[#918c5e]" />
      <div className="grow bg-linear-to-b from-[#766d60] to-[#8d8170]" />
    </div>
  );
}

export default function App() {
  return (
    <div className="flex h-[1596px] w-[2558px] flex-col overflow-hidden bg-[#454a5c]">
      <MenuBar />
      <div className="h-[2px] shrink-0 bg-[#343843]" />
      <div className="flex min-h-0 grow">
        <DesktopEdge />
        <div className="flex w-[2548px] flex-col overflow-hidden rounded-t-[9px]">
          <TabStrip />
          <Toolbar />
          <Bookmarks />
          <Page />
        </div>
      </div>
    </div>
  );
}
